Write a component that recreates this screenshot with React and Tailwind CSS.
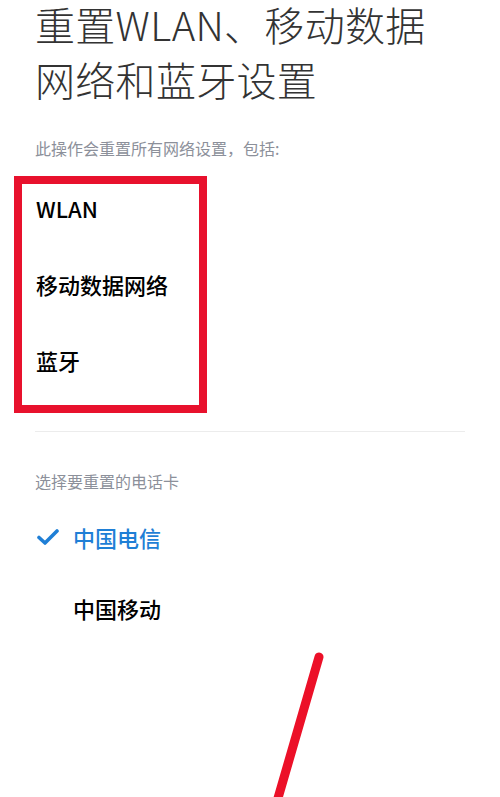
const font = { fontFamily: '"Noto Sans CJK SC", "Noto Sans", sans-serif' }

function CheckIcon() {
  return (
    <svg width="22" height="18" viewBox="0 0 22 18" aria-hidden="true">
      <path d="M2 9.5 L8 15 L20 3" fill="none" stroke="#1f7fd6" strokeWidth="3.6" strokeLinecap="round" strokeLinejoin="round" />
    </svg>
  )
}

export default function App() {
  return (
    <div className="relative h-[797px] w-[500px] overflow-hidden bg-white" style={font}>
      <h1 className="ml-[35px] mt-[-3px] text-[40px] font-extralight leading-[55px] tracking-[0.3px] text-[#333333]">
        重置WLAN、移动数据
        <br />
        网络和蓝牙设置
      </h1>

      <p className="ml-[35px] mt-[29px] text-[16px] leading-[24px] text-[#8c909a]">此操作会重置所有网络设置，包括:</p>

      <div className="ml-[14px] mt-[16px] flex w-[193px] flex-col gap-[46px] border-[8px] border-[#e8112d] pb-[30px] pl-[14px] pt-[9px]">
        <span className="text-[22px] font-medium leading-[30px] text-black">WLAN</span>
        <span className="text-[22px] font-medium leading-[30px] text-black">移动数据网络</span>
        <span className="text-[22px] font-medium leading-[30px] text-black">蓝牙</span>
      </div>

      <div className="mx-[35px] mt-[18px] h-px bg-[#ececec]" />

      <p className="ml-[35px] mt-[37px] text-[16px] leading-[24px] text-[#8c909a]">选择要重置的电话卡</p>

      <ul className="mt-[29px] flex flex-col gap-[41px]">
        <li className="flex items-center">
          <span className="flex w-[73px] justify-end pr-[14px]">
            <CheckIcon />
          </span>
          <span className="text-[22px] font-medium leading-[30px] text-[#1f7fd6]">中国电信</span>
        </li>
        <li className="flex items-center">
          <span className="w-[73px]" />
          <span className="text-[22px] font-medium leading-[30px] text-black">中国移动</span>
        </li>
      </ul>

      <svg className="pointer-events-none absolute left-0 top-0" width="500" height="797" aria-hidden="true">
        <line x1="319" y1="657" x2="276" y2="805" stroke="#ec1028" strokeWidth="9" strokeLinecap="round" />
      </svg>
    </div>
  )
}
